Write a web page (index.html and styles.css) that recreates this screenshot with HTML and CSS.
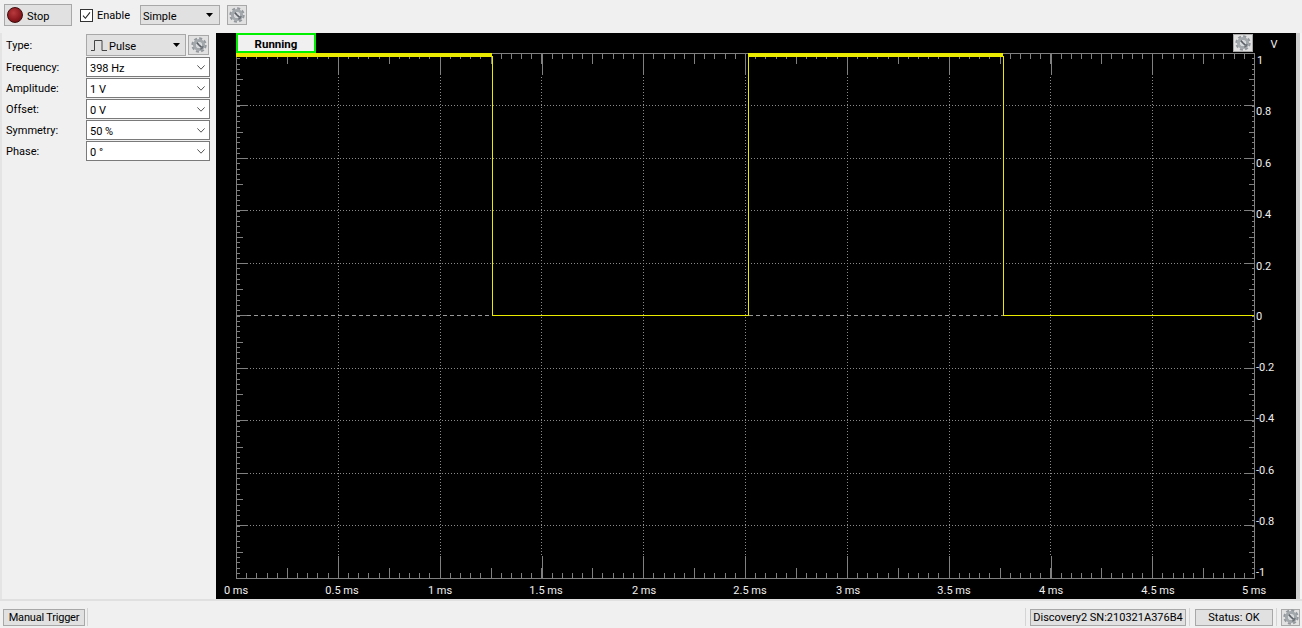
FILE: index.html
```html
<!DOCTYPE html>
<html lang="en">
<head>
<meta charset="utf-8">
<title>Wavegen</title>
<link rel="stylesheet" href="styles.css">
</head>
<body>
<svg class="defs" width="0" height="0" aria-hidden="true">
  <symbol id="gear" viewBox="0 0 16 16">
    <circle cx="8" cy="8" r="6.6" fill="none" stroke="#93989d" stroke-width="2.2" stroke-dasharray="3 2.18"/>
    <circle cx="8" cy="8" r="4.6" fill="none" stroke="#a3a8ad" stroke-width="3"/>
    <circle cx="8" cy="8" r="2.6" fill="#d6d9dc"/>
    <path d="M5.8 5.6 8 8l2.6 2.4" fill="none" stroke="#5b6066" stroke-width="1.7"/>
    <path d="M12.2 9a4.4 4.4 0 0 1-3 3.2" fill="none" stroke="#6d7278" stroke-width="1.2"/>
  </symbol>
  <symbol id="chev" viewBox="0 0 8 5">
    <path d="M.4.4 4 4.2 7.6.4" fill="none" stroke="#555" stroke-width="1"/>
  </symbol>
  <symbol id="tri" viewBox="0 0 7 4">
    <path d="M0 0h7L3.500 4z" fill="#000"/>
  </symbol>
</svg>
<div class="app">
  <header class="toolbar">
    <button class="btn stop"><span class="led"></span><span class="cap">Stop</span></button>
    <label class="check">
      <svg class="box" viewBox="0 0 12 12"><path d="M2.200 6.200 4.800 9 9.800 2.600" fill="none" stroke="#222" stroke-width="1.200"/></svg>
      Enable
    </label>
    <div class="btn combo simple"><span class="cap">Simple</span><svg class="tri"><use href="#tri"/></svg></div>
    <button class="btn gear top-gear"><svg class="gear-ic"><use href="#gear"/></svg></button>
  </header>
  <main class="main">
    <aside class="side">
      <span class="lbl">Type:</span>
      <div class="type-row">
        <div class="btn combo type">
          <svg class="pulse" viewBox="0 0 16 11"><path d="M0 10.500h3.500V.5h7.500v10h5" fill="none" stroke="#444" stroke-width="1"/></svg>
          <span class="cap">Pulse</span><svg class="tri"><use href="#tri"/></svg>
        </div>
        <button class="btn gear type-gear"><svg class="gear-ic"><use href="#gear"/></svg></button>
      </div>
      <span class="lbl">Frequency:</span><div class="field"><span class="cap">398 Hz</span><svg class="chev"><use href="#chev"/></svg></div>
      <span class="lbl">Amplitude:</span><div class="field"><span class="cap">1 V</span><svg class="chev"><use href="#chev"/></svg></div>
      <span class="lbl">Offset:</span><div class="field"><span class="cap">0 V</span><svg class="chev"><use href="#chev"/></svg></div>
      <span class="lbl">Symmetry:</span><div class="field"><span class="cap">50 %</span><svg class="chev"><use href="#chev"/></svg></div>
      <span class="lbl">Phase:</span><div class="field"><span class="cap">0 °</span><svg class="chev"><use href="#chev"/></svg></div>
    </aside>
    <section class="plot">
      <svg class="scope" viewBox="216 33 1080 566" width="1080" height="566">
        <g class="grid">
          <path d="M247 105.500H1243M247 158.500H1243M247 210.500H1243M247 263.500H1243M247 368.500H1243M247 420.500H1243M247 473.500H1243M247 525.500H1243"/>
          <path d="M338.500 77V556M440.500 77V556M541.500 77V556M643.500 77V556M745.500 77V556M847.500 77V556M949.500 77V556M1050.500 77V556M1152.500 77V556"/>
        </g>
        <g class="axis" shape-rendering="crispEdges">
          <path d="M236.500 53.500H1254.500V578.500H236.500Z"/>
          <path class="t6 xminor" d="M236 56H1254M236 575.500H1254"/>
          <path class="t11 xmid" d="M286.900 58.500H1254M286.900 573H1254"/>
          <path class="t22 xmajor" d="M338 64H1254M338 567H1254"/>
          <path class="t3 yminor" d="M238 53V578M1253 53V578"/>
          <path class="t6 ymid" d="M239.500 79V578M1251.500 79V578"/>
          <path class="t11 ymajor" d="M242 105V578M1249 105V578"/>
        </g>
        <path class="zero" d="M247 315.500H492M749 315.500H1003"/>
        <g class="wave" shape-rendering="crispEdges">
          <path class="thick" d="M236 55H492M748 55H1003"/>
          <path d="M492.500 56V315.500H748.500V56M1003.500 56V315.500H1254"/>
        </g>
        <g class="ylabels">
          <text x="1274" y="48" text-anchor="middle">V</text>
          <text x="1257" y="64">1</text>
          <text x="1256" y="115">0.8</text>
          <text x="1256" y="167">0.6</text>
          <text x="1256" y="218">0.4</text>
          <text x="1256" y="270">0.2</text>
          <text x="1256" y="320">0</text>
          <text x="1256" y="371">-0.2</text>
          <text x="1256" y="422">-0.4</text>
          <text x="1256" y="474">-0.6</text>
          <text x="1256" y="525">-0.8</text>
          <text x="1256" y="576">-1</text>
        </g>
        <g class="xlabels" text-anchor="middle">
          <text x="236" y="594">0 ms</text>
          <text x="342" y="594">0.5 ms</text>
          <text x="440" y="594">1 ms</text>
          <text x="546" y="594">1.5 ms</text>
          <text x="644" y="594">2 ms</text>
          <text x="750" y="594">2.5 ms</text>
          <text x="848" y="594">3 ms</text>
          <text x="954" y="594">3.5 ms</text>
          <text x="1051" y="594">4 ms</text>
          <text x="1158" y="594">4.5 ms</text>
          <text x="1254" y="594">5 ms</text>
        </g>
      </svg>
      <div class="running">Running</div>
      <button class="btn gear plot-gear"><svg class="gear-ic"><use href="#gear"/></svg></button>
    </section>
    <div class="rail"></div>
  </main>
  <footer class="status">
    <button class="btn manual">Manual Trigger</button>
    <span class="sep sep-first"></span>
    <span class="spacer"></span>
    <span class="sep"></span>
    <div class="btn device">Discovery2 SN:210321A376B4</div>
    <span class="sep"></span>
    <div class="btn state">Status: OK</div>
    <span class="sep"></span>
    <button class="btn gear status-gear"><svg class="gear-ic"><use href="#gear"/></svg></button>
  </footer>
</div>
</body>
</html>
```
FILE: styles.css
```css
* { box-sizing: border-box; }
html, body { margin: 0; height: 100%; overflow: hidden; background: #f0f0f0; }
body { font: 11px Roboto, "Liberation Sans", sans-serif; color: #000; }
.defs { position: absolute; }
.app { display: flex; flex-direction: column; width: 1302px; height: 628px; }

.btn {
  display: flex; align-items: center;
  margin: 0; padding: 0;
  border: 1px solid #a8a8a8;
  border-radius: 0;
  background: #e1e1e1;
  font: inherit; color: #000;
}
.cap { padding-top: 2px; }

.toolbar { height: 33px; flex: none; display: flex; align-items: flex-start; padding: 4px 0 0 4px; }
.stop { width: 68px; height: 22px; padding-left: 2px; }
.led {
  width: 16px; height: 16px; margin-right: 4px; border-radius: 50%;
  background: radial-gradient(circle at 40% 35%, #b83a3e, #8c1a1f 55%, #5e0c0f);
  border: 1px solid #3f0b0b;
}
.check { display: flex; align-items: center; gap: 4px; width: 57px; height: 22px; margin-left: 8px; }
.box { width: 13px; height: 13px; background: #fff; border: 1px solid #333; }
.combo { justify-content: space-between; }
.simple { width: 80px; height: 20px; margin: 1px 0 0 3px; padding: 0 6px 0 2px; }
.tri { width: 7px; height: 4px; }
.gear { justify-content: center; }
.gear-ic { width: 16px; height: 16px; }
.top-gear { width: 20px; height: 20px; margin: 1px 0 0 7px; }

.main { height: 566px; flex: none; display: flex; }
.side {
  width: 216px; flex: none;
  display: grid;
  grid-template-columns: 80px 124px;
  grid-auto-rows: 20px;
  grid-template-rows: 22px;
  row-gap: 1px;
  padding: 1px 0 0 4px;
  align-items: center;
  border-left: 2px solid #e4e4e4;
}
.lbl { padding-top: 2px; line-height: 18px; }
.type-row { display: flex; gap: 2px; }
.type { width: 100px; height: 22px; padding: 0 5px 0 4px; }
.type .cap { flex: 1; margin-left: 2px; }
.pulse { width: 16px; height: 11px; }
.type-gear { width: 21px; height: 20px; margin-top: 1px; }
.field {
  height: 20px; display: flex; align-items: center; justify-content: space-between;
  padding: 0 4px 0 3px;
  background: #fff; border: 1px solid #7a7a7a;
}
.chev { width: 8px; height: 5px; }

.plot { position: relative; width: 1080px; flex: none; background: #000; }
.scope { display: block; }
.grid path { fill: none; stroke: #8a8a8a; stroke-width: 1; stroke-dasharray: 1 2; }
.axis path { fill: none; stroke: #808080; stroke-width: 1; }
.axis path.t3 { stroke-width: 3px; }
.axis path.t6 { stroke-width: 6px; }
.axis path.t11 { stroke-width: 11px; }
.axis path.t22 { stroke-width: 22px; }
.xminor { stroke-dasharray: 1 9.18; }
.xmid { stroke-dasharray: 1 49.9; }
.xmajor { stroke-dasharray: 1 100.8; }
.yminor { stroke-dasharray: 1 4.25; }
.ymid { stroke-dasharray: 1 25.25; }
.ymajor { stroke-dasharray: 1 51.5; }
.zero { fill: none; stroke: #999; stroke-width: 1; stroke-dasharray: 4 3; }
.wave path { fill: none; stroke: #eaea00; stroke-width: 1; }
.wave path.thick { stroke-width: 4; }
.scope text { font: 11px Roboto, "Liberation Sans", sans-serif; fill: #f0f0f0; }

.running {
  position: absolute; left: 20px; top: 0;
  width: 80px; height: 20px;
  border: 2px solid #00f000;
  background: #f0f0f0;
  font-size: 11.5px; font-weight: 700; text-align: center; line-height: 18px;
}
.plot-gear { position: absolute; left: 1017px; top: 1px; width: 20px; height: 18px; }

.rail { width: 6px; flex: none; border-left: 4px solid #cfcfcf; background: #f4f4f4; }

.status {
  flex: 1; display: flex; align-items: center;
  padding: 5px 2px 0 3px;
  border-top: 2px solid #e0e0e0;
}
.spacer { flex: 1; }
.sep { width: 1px; height: 18px; background: #d4d4d4; margin: 0 3px; }
.sep-first { margin-left: 2px; }
.manual { width: 82px; height: 17px; justify-content: center; letter-spacing: -0.2px; }
.device { width: 156px; height: 17px; justify-content: center; margin-left: 1px; }
.state { width: 78px; height: 17px; justify-content: center; margin-left: 2px; }
.status-gear { width: 19px; height: 17px; margin-left: 1px; }
```
